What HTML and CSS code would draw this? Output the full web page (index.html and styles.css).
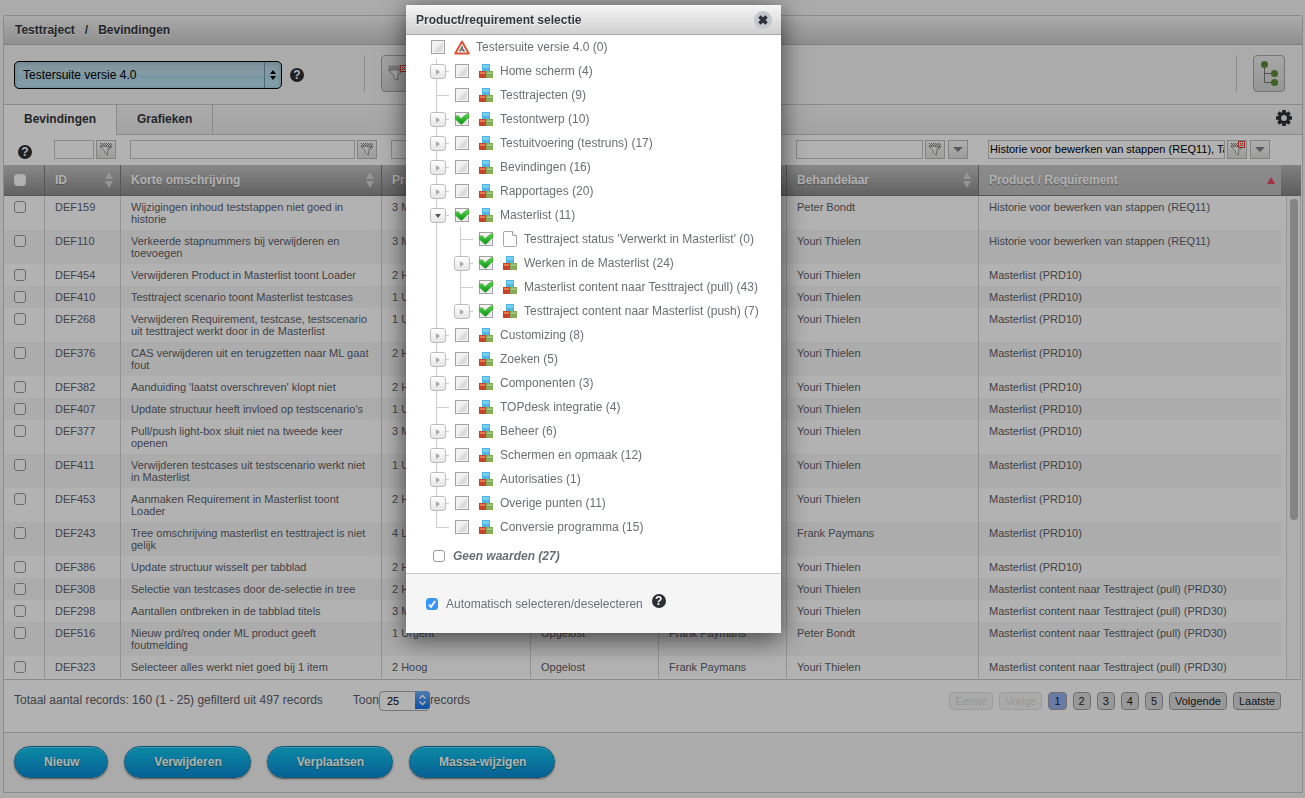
FILE: index.html
```html
<!DOCTYPE html>
<html lang="nl">
<head>
<meta charset="utf-8">
<title>Testtraject / Bevindingen</title>
<link rel="stylesheet" href="styles.css">
</head>
<body>
<svg class="sprite" aria-hidden="true">
  <defs>
    <pattern id="dots" width="2" height="2" patternUnits="userSpaceOnUse"><path d="M0 0h1v1H0zM1 1h1v1H1z" fill="#808080"/></pattern>
    <linearGradient id="steel"><stop offset="0" stop-color="#ddd"/><stop offset=".45" stop-color="#fff"/><stop offset="1" stop-color="#8a8a8a"/></linearGradient>
    <linearGradient id="green" x2="0" y2="1"><stop offset="0" stop-color="#62d558"/><stop offset=".5" stop-color="#2fb52e"/><stop offset="1" stop-color="#078a12"/></linearGradient>
  </defs>
  <symbol id="funnel" viewBox="0 0 16 16">
    <path d="M2 2h12v3H2z" fill="url(#dots)"/>
    <path d="M2 5.500h12L9.500 10v4l-3-2v-2z" fill="url(#steel)" stroke="#8c8c8c" stroke-width=".8"/>
  </symbol>
  <symbol id="clear" viewBox="0 0 7 7"><path d="M.5.5h6v6h-6z" fill="#f3e6e4" stroke="#d3382c"/><path d="M2 2l3 3M5 2L2 5" stroke="#d3382c"/></symbol>
  <symbol id="down" viewBox="0 0 10 5"><path d="M0 0h10L5 5z" fill="#7d828c"/></symbol>
  <symbol id="sort" viewBox="0 0 10 18"><path d="M1 8l4-7 4 7zM1 10l4 7 4-7z" fill="#d4d4d4"/></symbol>
  <symbol id="blocks" viewBox="0 0 14 14">
    <path d="M3 0h8v7H3z" fill="#52b5e0"/><path d="M4 1h6v3H4z" fill="#74d0f7"/>
    <path d="M0 7h7v7H0z" fill="#c9412a"/><path d="M1 8h5v2H1z" fill="#ea7a48"/>
    <path d="M7 7h7v7H7z" fill="#84ab58"/><path d="M8 8h5v2H8z" fill="#9dc272"/>
  </symbol>
  <symbol id="page" viewBox="0 0 14 16"><path d="M1.500.5h8l4 4v10q0 1-1 1h-11q-1 0-1-1v-13q0-1 1-1z" fill="#fcfcfc" stroke="#a5a5a5"/><path d="M9.500.5v4h4" fill="#fff" stroke="#a5a5a5"/></symbol>
  <symbol id="works" viewBox="0 0 16 15"><path d="M8 1.500L14.800 13.500H1.200z" fill="#fff" stroke="#dc5337" stroke-width="2" stroke-linejoin="round"/><path d="M7.500 6l1.500.5v2l2.500 3H8.500L8 9.500l-1 2H4.800L7 8z" fill="#666"/></symbol>
  <symbol id="check" viewBox="0 0 16 14"><path d="M1 4.500L4 3.500 7 6.500 13.500 1.500l1.500.5v3L7.500 12.500 1.500 7.500z" fill="url(#green)" stroke="#2ea32b" stroke-width=".5"/></symbol>
  <symbol id="right" viewBox="0 0 4 6"><path d="M0 0l4 3-4 3z" fill="#a9a9a9"/></symbol>
</svg>

<main class="panel">
  <h1 class="crumbs"><span>Testtraject</span><span>/</span><span>Bevindingen</span></h1>
  <div class="toolbar">
    <div class="version">
      <select aria-label="Versie"><option>Testersuite versie 4.0</option></select>
      <svg class="updown" viewBox="0 0 18 26"><path d="M.5 0v26" stroke="#6e97a8"/><path d="M6 12l3-4 3 4zM6 14l3 4 3-4z"/></svg>
    </div>
    <button class="help" aria-label="Help">?</button>
    <div class="group left-group"><button class="tool" aria-label="Filters wissen"><svg width="22" height="26"><use href="#funnel" width="20" height="24"/><use href="#clear" x="14" y="4" width="7" height="7"/></svg></button></div>
    <div class="group right-group"><button class="tool" aria-label="Boomstructuur"><svg width="20" height="28" viewBox="0 0 20 28"><path d="M5.500 4v18.500h10M5.500 13.500h10" fill="none" stroke="#777"/><g fill="#5b8c33"><circle cx="5.500" cy="4.500" r="3.500"/><circle cx="15.500" cy="13.500" r="3.500"/><circle cx="15.500" cy="22.500" r="3.500"/></g></svg></button></div>
  </div>
  <nav class="tabs">
    <button class="tab active">Bevindingen</button><button class="tab">Grafieken</button>
    <button class="gear" aria-label="Instellingen"><svg width="16" height="16" viewBox="-8 -8 16 16"><circle r="4.500" fill="none" stroke="#2c2e33" stroke-width="3.200"/><g stroke="#2c2e33" stroke-width="3.600"><path d="M0-8v3M0 8V5M-8 0h3M8 0H5M-5.600-5.600l2 2M5.600 5.600l-2-2M-5.600 5.600l2-2M5.600-5.600l-2 2"/></g></svg></button>
  </nav>

  <div class="grid">
    <table>
      <colgroup><col class="c-check"><col class="c-id"><col class="c-text"><col class="c-prio"><col class="c-std"><col class="c-std"><col class="c-user"><col></colgroup>
      <thead>
        <tr class="filters">
          <td><button class="help" aria-label="Help">?</button></td>
          <td><div class="filter"><input type="text" aria-label="Filter ID"><button aria-label="Filter"><svg width="16" height="16"><use href="#funnel"/></svg></button></div></td>
          <td><div class="filter"><input type="text" aria-label="Filter omschrijving"><button aria-label="Filter"><svg width="16" height="16"><use href="#funnel"/></svg></button></div></td>
          <td><div class="filter"><input type="text" aria-label="Filter prioriteit"></div></td>
          <td></td><td></td>
          <td><div class="filter wide"><input type="text" aria-label="Filter behandelaar"><button aria-label="Filter"><svg width="16" height="16"><use href="#funnel"/></svg></button><button class="more" aria-label="Kies"><svg width="10" height="5"><use href="#down"/></svg></button></div></td>
          <td><div class="filter wide"><input type="text" aria-label="Filter product" value="Historie voor bewerken van stappen (REQ11), Taken"><button aria-label="Filter wissen"><svg width="16" height="16"><use href="#funnel"/><use href="#clear" x="9" width="7" height="7"/></svg></button><button class="more" aria-label="Kies"><svg width="10" height="5"><use href="#down"/></svg></button></div></td>
        </tr>
        <tr class="heads">
          <th><input type="checkbox" aria-label="Alles"></th>
          <th><div>ID<svg width="10" height="18"><use href="#sort"/></svg></div></th>
          <th><div>Korte omschrijving<svg width="10" height="18"><use href="#sort"/></svg></div></th>
          <th><div>Prioriteit</div></th><th></th><th></th>
          <th><div>Behandelaar<svg width="10" height="18"><use href="#sort"/></svg></div></th>
          <th class="sorted"><div>Product / Requirement<svg width="8" height="7"><path d="M0 7l4-7 4 7z" fill="#e8445a"/></svg></div></th>
        </tr>
      </thead>
      <tbody>
        <tr><td><input type="checkbox" aria-label="DEF159"></td><td>DEF159</td><td>Wijzigingen inhoud teststappen niet goed in historie</td><td>3 Middel</td><td></td><td></td><td>Peter Bondt</td><td>Historie voor bewerken van stappen (REQ11)</td></tr>
        <tr><td><input type="checkbox" aria-label="DEF110"></td><td>DEF110</td><td>Verkeerde stapnummers bij verwijderen en toevoegen</td><td>3 Middel</td><td></td><td></td><td>Youri Thielen</td><td>Historie voor bewerken van stappen (REQ11)</td></tr>
        <tr><td><input type="checkbox" aria-label="DEF454"></td><td>DEF454</td><td>Verwijderen Product in Masterlist toont Loader</td><td>2 Hoog</td><td></td><td></td><td>Youri Thielen</td><td>Masterlist (PRD10)</td></tr>
        <tr><td><input type="checkbox" aria-label="DEF410"></td><td>DEF410</td><td>Testtraject scenario toont Masterlist testcases</td><td>1 Urgent</td><td></td><td></td><td>Youri Thielen</td><td>Masterlist (PRD10)</td></tr>
        <tr><td><input type="checkbox" aria-label="DEF268"></td><td>DEF268</td><td>Verwijderen Requirement, testcase, testscenario uit testtraject werkt door in de Masterlist</td><td>1 Urgent</td><td></td><td></td><td>Youri Thielen</td><td>Masterlist (PRD10)</td></tr>
        <tr><td><input type="checkbox" aria-label="DEF376"></td><td>DEF376</td><td>CAS verwijderen uit en terugzetten naar ML gaat fout</td><td>2 Hoog</td><td></td><td></td><td>Youri Thielen</td><td>Masterlist (PRD10)</td></tr>
        <tr><td><input type="checkbox" aria-label="DEF382"></td><td>DEF382</td><td>Aanduiding 'laatst overschreven' klopt niet</td><td>2 Hoog</td><td></td><td></td><td>Youri Thielen</td><td>Masterlist (PRD10)</td></tr>
        <tr><td><input type="checkbox" aria-label="DEF407"></td><td>DEF407</td><td>Update structuur heeft invloed op testscenario's</td><td>1 Urgent</td><td></td><td></td><td>Youri Thielen</td><td>Masterlist (PRD10)</td></tr>
        <tr><td><input type="checkbox" aria-label="DEF377"></td><td>DEF377</td><td>Pull/push light-box sluit niet na tweede keer openen</td><td>3 Middel</td><td></td><td></td><td>Youri Thielen</td><td>Masterlist (PRD10)</td></tr>
        <tr><td><input type="checkbox" aria-label="DEF411"></td><td>DEF411</td><td>Verwijderen testcases uit testscenario werkt niet in Masterlist</td><td>1 Urgent</td><td></td><td></td><td>Youri Thielen</td><td>Masterlist (PRD10)</td></tr>
        <tr><td><input type="checkbox" aria-label="DEF453"></td><td>DEF453</td><td>Aanmaken Requirement in Masterlist toont Loader</td><td>2 Hoog</td><td></td><td></td><td>Youri Thielen</td><td>Masterlist (PRD10)</td></tr>
        <tr><td><input type="checkbox" aria-label="DEF243"></td><td>DEF243</td><td>Tree omschrijving masterlist en testtraject is niet gelijk</td><td>4 Laag</td><td></td><td></td><td>Frank Paymans</td><td>Masterlist (PRD10)</td></tr>
        <tr><td><input type="checkbox" aria-label="DEF386"></td><td>DEF386</td><td>Update structuur wisselt per tabblad</td><td>2 Hoog</td><td></td><td></td><td>Youri Thielen</td><td>Masterlist (PRD10)</td></tr>
        <tr><td><input type="checkbox" aria-label="DEF308"></td><td>DEF308</td><td>Selectie van testcases door de-selectie in tree</td><td>2 Hoog</td><td></td><td></td><td>Youri Thielen</td><td>Masterlist content naar Testtraject (pull) (PRD30)</td></tr>
        <tr><td><input type="checkbox" aria-label="DEF298"></td><td>DEF298</td><td>Aantallen ontbreken in de tabblad titels</td><td>3 Middel</td><td></td><td></td><td>Youri Thielen</td><td>Masterlist content naar Testtraject (pull) (PRD30)</td></tr>
        <tr><td><input type="checkbox" aria-label="DEF516"></td><td>DEF516</td><td>Nieuw prd/req onder ML product geeft foutmelding</td><td>1 Urgent</td><td>Opgelost</td><td>Frank Paymans</td><td>Peter Bondt</td><td>Masterlist content naar Testtraject (pull) (PRD30)</td></tr>
        <tr><td><input type="checkbox" aria-label="DEF323"></td><td>DEF323</td><td>Selecteer alles werkt niet goed bij 1 item</td><td>2 Hoog</td><td>Opgelost</td><td>Frank Paymans</td><td>Youri Thielen</td><td>Masterlist content naar Testtraject (pull) (PRD30)</td></tr>
      </tbody>
    </table>
    <div class="scroll"><div class="scroll-head"></div><div class="track"><div class="thumb"></div></div></div>
  </div>

  <div class="info">
    <span>Totaal aantal records: 160 (1 - 25) gefilterd uit 497 records</span>
    <label class="length">Toon<span class="count"><select><option>25</option></select><svg viewBox="0 0 15 18"><path d="M4.500 7.500l3-3 3 3M4.500 10.500l3 3 3-3" fill="none" stroke="#fff" stroke-width="1.500"/></svg></span>records</label>
    <div class="pages"><button disabled>Eerste</button><button disabled>Vorige</button><button class="current">1</button><button>2</button><button>3</button><button>4</button><button>5</button><button>Volgende</button><button>Laatste</button></div>
  </div>
  <div class="actions"><button>Nieuw</button><button>Verwijderen</button><button>Verplaatsen</button><button>Massa-wijzigen</button></div>
</main>

<div class="backdrop"></div>
<section class="dialog" role="dialog" aria-label="Product/requirement selectie">
  <header><h2>Product/requirement selectie</h2><button class="close" aria-label="Sluiten"><svg width="10" height="10" viewBox="0 0 10 10"><path d="M1.500 1.500l7 7M8.500 1.500l-7 7" stroke="#2e3238" stroke-width="3.600"/></svg></button></header>
  <div class="tree">
    <label class="node"><span class="box"><input type="checkbox"></span><span class="icon"><svg width="16" height="15"><use href="#works"/></svg></span>Testersuite versie 4.0 (0)</label>
    <ul>
      <li><button class="toggle" aria-label="Openen"><svg width="4" height="6"><use href="#right"/></svg></button><label class="node"><span class="box"><input type="checkbox"></span><span class="icon"><svg width="14" height="14"><use href="#blocks"/></svg></span>Home scherm (4)</label></li>
      <li><label class="node"><span class="box"><input type="checkbox"></span><span class="icon"><svg width="14" height="14"><use href="#blocks"/></svg></span>Testtrajecten (9)</label></li>
      <li><button class="toggle" aria-label="Openen"><svg width="4" height="6"><use href="#right"/></svg></button><label class="node"><span class="box"><input type="checkbox" checked><svg width="16" height="14"><use href="#check"/></svg></span><span class="icon"><svg width="14" height="14"><use href="#blocks"/></svg></span>Testontwerp (10)</label></li>
      <li><button class="toggle" aria-label="Openen"><svg width="4" height="6"><use href="#right"/></svg></button><label class="node"><span class="box"><input type="checkbox"></span><span class="icon"><svg width="14" height="14"><use href="#blocks"/></svg></span>Testuitvoering (testruns) (17)</label></li>
      <li><button class="toggle" aria-label="Openen"><svg width="4" height="6"><use href="#right"/></svg></button><label class="node"><span class="box"><input type="checkbox"></span><span class="icon"><svg width="14" height="14"><use href="#blocks"/></svg></span>Bevindingen (16)</label></li>
      <li><button class="toggle" aria-label="Openen"><svg width="4" height="6"><use href="#right"/></svg></button><label class="node"><span class="box"><input type="checkbox"></span><span class="icon"><svg width="14" height="14"><use href="#blocks"/></svg></span>Rapportages (20)</label></li>
      <li><button class="toggle" aria-label="Sluiten"><svg width="6" height="4"><path d="M0 0h6L3 4z" fill="#555"/></svg></button><label class="node"><span class="box"><input type="checkbox" checked><svg width="16" height="14"><use href="#check"/></svg></span><span class="icon"><svg width="14" height="14"><use href="#blocks"/></svg></span>Masterlist (11)</label>
        <ul>
          <li><label class="node"><span class="box"><input type="checkbox" checked><svg width="16" height="14"><use href="#check"/></svg></span><span class="icon"><svg width="14" height="16"><use href="#page"/></svg></span>Testtraject status 'Verwerkt in Masterlist' (0)</label></li>
          <li><button class="toggle" aria-label="Openen"><svg width="4" height="6"><use href="#right"/></svg></button><label class="node"><span class="box"><input type="checkbox" checked><svg width="16" height="14"><use href="#check"/></svg></span><span class="icon"><svg width="14" height="14"><use href="#blocks"/></svg></span>Werken in de Masterlist (24)</label></li>
          <li><label class="node"><span class="box"><input type="checkbox" checked><svg width="16" height="14"><use href="#check"/></svg></span><span class="icon"><svg width="14" height="14"><use href="#blocks"/></svg></span>Masterlist content naar Testtraject (pull) (43)</label></li>
          <li><button class="toggle" aria-label="Openen"><svg width="4" height="6"><use href="#right"/></svg></button><label class="node"><span class="box"><input type="checkbox" checked><svg width="16" height="14"><use href="#check"/></svg></span><span class="icon"><svg width="14" height="14"><use href="#blocks"/></svg></span>Testtraject content naar Masterlist (push) (7)</label></li>
        </ul>
      </li>
      <li><button class="toggle" aria-label="Openen"><svg width="4" height="6"><use href="#right"/></svg></button><label class="node"><span class="box"><input type="checkbox"></span><span class="icon"><svg width="14" height="14"><use href="#blocks"/></svg></span>Customizing (8)</label></li>
      <li><button class="toggle" aria-label="Openen"><svg width="4" height="6"><use href="#right"/></svg></button><label class="node"><span class="box"><input type="checkbox"></span><span class="icon"><svg width="14" height="14"><use href="#blocks"/></svg></span>Zoeken (5)</label></li>
      <li><button class="toggle" aria-label="Openen"><svg width="4" height="6"><use href="#right"/></svg></button><label class="node"><span class="box"><input type="checkbox"></span><span class="icon"><svg width="14" height="14"><use href="#blocks"/></svg></span>Componenten (3)</label></li>
      <li><label class="node"><span class="box"><input type="checkbox"></span><span class="icon"><svg width="14" height="14"><use href="#blocks"/></svg></span>TOPdesk integratie (4)</label></li>
      <li><button class="toggle" aria-label="Openen"><svg width="4" height="6"><use href="#right"/></svg></button><label class="node"><span class="box"><input type="checkbox"></span><span class="icon"><svg width="14" height="14"><use href="#blocks"/></svg></span>Beheer (6)</label></li>
      <li><button class="toggle" aria-label="Openen"><svg width="4" height="6"><use href="#right"/></svg></button><label class="node"><span class="box"><input type="checkbox"></span><span class="icon"><svg width="14" height="14"><use href="#blocks"/></svg></span>Schermen en opmaak (12)</label></li>
      <li><button class="toggle" aria-label="Openen"><svg width="4" height="6"><use href="#right"/></svg></button><label class="node"><span class="box"><input type="checkbox"></span><span class="icon"><svg width="14" height="14"><use href="#blocks"/></svg></span>Autorisaties (1)</label></li>
      <li><button class="toggle" aria-label="Openen"><svg width="4" height="6"><use href="#right"/></svg></button><label class="node"><span class="box"><input type="checkbox"></span><span class="icon"><svg width="14" height="14"><use href="#blocks"/></svg></span>Overige punten (11)</label></li>
      <li><label class="node"><span class="box"><input type="checkbox"></span><span class="icon"><svg width="14" height="14"><use href="#blocks"/></svg></span>Conversie programma (15)</label></li>
    </ul>
  </div>
  <label class="none"><input type="checkbox">Geen waarden (27)</label>
  <footer>
    <label class="auto"><span class="blue"><input type="checkbox" checked><svg width="12" height="12" viewBox="0 0 12 12"><path d="M3 6.500l2 2.500 4-6" fill="none" stroke="#fff" stroke-width="1.800"/></svg></span>Automatisch selecteren/deselecteren</label>
    <button class="help" aria-label="Help">?</button>
  </footer>
</section>
</body>
</html>
```

FILE: styles.css
```css
* { box-sizing: border-box; }
body {
  margin: 0;
  padding: 15px 2px 5px 3px;
  background: #f5f5f5;
  color: #5c6068;
  font: 12px/14px "Liberation Sans", Arial, sans-serif;
}
button, input, select { font: inherit; margin: 0; }
button { padding: 0; border: 0; background: none; }
svg { display: block; }
.sprite { position: absolute; width: 0; height: 0; }
input[type="checkbox"] {
  display: block;
  appearance: none;
  width: 12px;
  height: 12px;
  border: 1px solid #999;
  border-radius: 3px;
  background: #fff;
}

/* page */
.panel { border: 1px solid #c8c8c8; border-radius: 3px 3px 0 0; background: #fff; }
.crumbs {
  display: flex;
  gap: 10px;
  margin: 0;
  padding: 7px 11px 7px;
  border-bottom: 1px solid #b5b5b5;
  background: linear-gradient(#f5f5f5, #cdcdcd);
  color: #34363b;
  font-size: 12px;
  font-weight: bold;
  text-shadow: 0 1px 0 #fff;
}
.toolbar {
  display: flex;
  align-items: center;
  height: 60px;
  padding: 0 17px 0 10px;
  border-bottom: 1px solid #c8c8c8;
  background: #f5f5f5;
}
.version { display: grid; width: 268px; height: 28px; }
.version > * { grid-area: 1 / 1; }
.version select {
  appearance: none;
  padding: 0 8px;
  border: 1px solid #000;
  border-radius: 5px;
  background: linear-gradient(#b6d3de, #bfe0ec 48%, #abd7e7 52%, #c5eaf8);
  box-shadow: inset 0 0 5px #8fb6c6;
  color: #000;
}
.updown { width: 18px; height: 26px; justify-self: end; align-self: center; }
.help {
  width: 14px;
  height: 14px;
  border-radius: 50%;
  background: #2c2e33;
  color: #fff;
  font-size: 12px;
  font-weight: bold;
  line-height: 14px;
  text-align: center;
}
.version + .help { margin-left: 8px; }
.group { display: flex; align-items: center; height: 37px; padding-left: 16px; border-left: 1px solid #c8c8c8; }
.left-group { margin-left: 60px; }
.right-group { margin-left: auto; }
.toolbar .group { margin-bottom: 2px; }
.tool {
  display: grid;
  place-items: center;
  width: 32px;
  height: 37px;
  border: 1px solid #a8a8a8;
  border-radius: 4px;
  background: linear-gradient(#efefef, #d6d6d6);
}
.tabs { display: flex; height: 30px; background: linear-gradient(#f5f5f5, #eaeaea); box-shadow: inset 0 -1px #c8c8c8; }
.tab { padding: 0 20px 2px; border-right: 1px solid #c8c8c8; color: #34363b; font-weight: bold; }
.tab.active { background: #fff; }
.gear { margin: 0 10px 4px auto; }

/* table */
.grid { display: flex; margin-right: 1px; padding-bottom: 1px; border-bottom: 1px solid #c8c8c8; }
table { flex: 1; width: 100%; border-collapse: separate; border-spacing: 0; table-layout: fixed; }
.c-check { width: 41px; }
.c-id { width: 76px; }
.c-text { width: 261px; }
.c-prio { width: 149px; }
.c-std { width: 128px; }
.c-user { width: 192px; }
td, th { padding: 0; text-align: left; }
.filters td { height: 30px; padding: 0 0 2px 9px; vertical-align: middle; }
.filters td:first-child { padding: 4px 0 0 14px; }
.filter { display: flex; gap: 2px; padding-right: 5px; }
.filter.wide { padding-right: 11px; }
.filter input {
  flex: 1;
  min-width: 0;
  height: 19px;
  padding: 0 0 0 1px;
  border: 1px solid #c4c4c4;
  background: #fff;
  color: #000;
  font-size: 11px;
}
.filter button {
  display: grid;
  place-items: center;
  width: 20px;
  height: 19px;
  border: 1px solid #bbb;
  background: linear-gradient(#fafafa, #e2e2e0);
}
.filter .more { margin-left: 1px; }
.heads th {
  height: 31px;
  padding: 0 6px 0 10px;
  border-right: 1px solid #7c7c7c;
  border-bottom: 1px solid #7c7c7c;
  background: linear-gradient(#c5c5c5, #8d8d8d);
  color: #fff;
  font-weight: bold;
  text-shadow: 0 1px 1px #777;
}
.heads th div { display: flex; align-items: center; justify-content: space-between; }
.heads th:last-child { border-right: 0; }
.heads .sorted { background: linear-gradient(#c8c8c8, #bebebe); }
.heads input[type="checkbox"] { border-color: #f2f2f2; }
tbody td {
  padding: 5px 10px;
  border-right: 1px solid #d2d2d2;
  font-size: 11px;
  line-height: 12px;
  vertical-align: top;
}
tbody td:last-child { border-right: 0; }
tbody tr:nth-child(even) { background: #f7f7f7; }
.scroll { display: flex; flex-direction: column; width: 20px; }
.scroll-head { height: 31px; margin-top: 30px; border-bottom: 1px solid #7c7c7c; background: linear-gradient(#b8b8b8, #858585); }
.track { flex: 1; margin-left: 5px; padding: 3px 3px 0; border: solid #dadada; border-width: 0 1px; background: #fafafa; }
.thumb { width: 8px; height: 67%; border-radius: 4px; background: #bdbdbd; }

/* record count and paging */
.info { display: flex; height: 53px; padding: 12px 21px 0 10px; border-bottom: 1px solid #c8c8c8; line-height: 18px; align-items: start; }
.info > span { margin-top: -1px; }
.length { display: flex; margin: -1px 0 0 30px; }
.count { display: grid; width: 51px; height: 18px; }
.count > * { grid-area: 1 / 1; }
.count select { appearance: none; padding: 0 7px; border: 1px solid #aaa; border-radius: 4px; background: #fff; color: #000; font-size: 11px; }
.count svg { justify-self: end; width: 15px; height: 18px; border-radius: 0 4px 4px 0; background: linear-gradient(#6fb3f9, #1270ee); }
.pages { display: flex; gap: 6px; margin-left: auto; }
.pages button { height: 18px; padding: 0 5px; border: 1px solid #a0a0a0; border-radius: 4px; background: #dcdcdc; color: #222; font-size: 11px; line-height: 16px; }
.pages .current { background: #99aff0; }
.pages button:disabled { border-color: #e0e0e0; background: #f4f4f4; color: #d8d8d8; }
.actions { display: flex; gap: 16px; height: 59px; padding: 13px 10px 0; background: #f5f5f5; }
.actions button {
  height: 32px;
  padding: 0 28px 0 29px;
  border: 1px solid #1380b4;
  border-radius: 16px;
  background: linear-gradient(#10c4ec, #0b8cd6);
  box-shadow: 0 1px 2px #777, inset 0 1px #5fd8f5;
  color: #fff;
  font-weight: bold;
  text-shadow: 0 1px 1px #066;
}

/* dialog */
.backdrop { position: fixed; inset: 0; background: rgba(0, 0, 0, .3); }
.dialog {
  position: absolute;
  top: 5px;
  left: 406px;
  width: 375px;
  background: #fff;
  box-shadow: 0 5px 24px rgba(0, 0, 0, .65);
  color: #6b6f76;
}
.dialog header {
  display: flex;
  align-items: center;
  justify-content: space-between;
  height: 30px;
  padding: 0 9px 0 10px;
  border-bottom: 1px solid #aaa;
  background: linear-gradient(#f6f6f6, #cfcfcf);
}
.dialog h2 { margin: 0; color: #34363b; font-size: 12px; text-shadow: 0 1px 0 #fff; }
.close { display: grid; place-items: center; width: 18px; height: 18px; border-radius: 50%; background: #c3c7ce; }
.tree { padding-left: 24px; }
.tree ul { margin: 0; padding: 0; list-style: none; }
.tree li { position: relative; padding-left: 24px; }
.tree li::before { content: ""; position: absolute; left: 6px; top: 0; bottom: 0; border-left: 1px solid #ccc; }
.tree li:last-child::before { bottom: auto; height: 12px; }
.tree li::after { content: ""; position: absolute; left: 6px; top: 12px; width: 13px; border-top: 1px solid #ccc; }
.toggle {
  position: absolute;
  z-index: 1;
  left: 0;
  top: 5px;
  display: grid;
  place-items: center;
  width: 16px;
  height: 15px;
  border: 1px solid #bcbcbc;
  border-radius: 3px;
  background: linear-gradient(#fff, #e6e6e6);
}
.node { display: flex; align-items: center; height: 24px; white-space: nowrap; }
.box { display: grid; place-items: center; width: 16px; margin-right: 8px; }
.box > * { grid-area: 1 / 1; }
.box input[type="checkbox"] {
  width: 14px;
  height: 14px;
  border-color: #a2a2a2;
  border-radius: 0;
  background: linear-gradient(135deg, #f2f2f2 40%, #dadada 60%, #e8e8e8);
  box-shadow: inset 0 0 0 1px #f3f3f3;
}
.icon { display: grid; place-items: center; width: 16px; margin-right: 6px; }
.none { display: flex; align-items: center; gap: 8px; padding: 10px 0 10px 27px; font-weight: bold; font-style: italic; }
.dialog footer { display: flex; align-items: center; gap: 9px; height: 60px; padding-left: 20px; border-top: 1px solid #c8c8c8; background: #f5f5f5; }
.dialog footer .help { margin-bottom: 5px; }
.auto { display: flex; align-items: center; gap: 8px; }
.blue { display: grid; }
.blue > * { grid-area: 1 / 1; }
.blue input[type="checkbox"] { border-color: #3b93f7; background: #3b93f7; }
```
